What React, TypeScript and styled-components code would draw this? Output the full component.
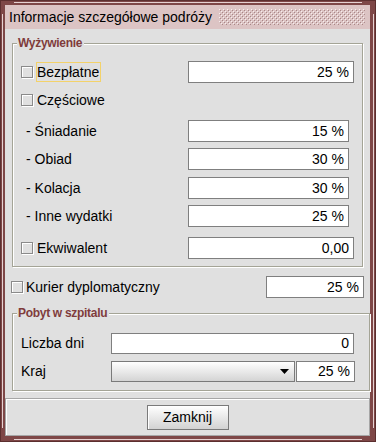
import React from 'react';
import styled, { createGlobalStyle } from 'styled-components';

const GlobalStyle = createGlobalStyle`
  html, body {
    margin: 0;
    padding: 0;
    background: #7e4747;
  }
  * {
    box-sizing: border-box;
  }
`;

const Frame = styled.div`
  position: relative;
  width: 376px;
  height: 442px;
  display: flex;
  flex-direction: column;
  padding: 4px 5px 5px 4px;
  background: #7e4747;
  border: 1px solid #5c2f2f;
  font-family: "Liberation Sans", Arial, sans-serif;
  font-size: 14px;
  color: #000;
  &::before {
    content: '';
    position: absolute;
    top: 1px;
    bottom: 1px;
    left: 13px;
    right: 13px;
    border-top: 1px solid #e6d2d2;
    border-bottom: 1px solid #e6d2d2;
    pointer-events: none;
  }
  &::after {
    content: '';
    position: absolute;
    top: 13px;
    bottom: 13px;
    left: 1px;
    right: 1px;
    border-left: 1px solid #e6d2d2;
    border-right: 1px solid #e6d2d2;
    pointer-events: none;
  }
`;

const TitleBar = styled.div`
  height: 24px;
  display: flex;
  align-items: center;
  padding-left: 4px;
  background: #dcc4c4;
`;

const TitleText = styled.span`
  font-size: 14px;
  white-space: nowrap;
`;

const Bumps = styled.svg`
  flex: 1;
  height: 16px;
  margin: 0 5px 0 7px;
`;

const Content = styled.div`
  flex: 1;
  display: flex;
  flex-direction: column;
  background: #e0e0e0;
  padding-top: 14px;
`;

const Group = styled.div<{ $w?: number; $pb: number; $mt: number }>`
  width: ${p => (p.$w ? `${p.$w}px` : 'auto')};
  margin: ${p => p.$mt}px 0 0 7px;
  padding: 0 0 ${p => p.$pb}px 0;
  border: 1px solid #a4a496;
  box-shadow: inset 1px 1px 0 #fff, 1px 1px 0 #fff;
`;

const GroupTitle = styled.div`
  width: fit-content;
  margin: -8px 0 0 4px;
  padding: 0 2px 0 1px;
  height: 14px;
  line-height: 14px;
  background: #e0e0e0;
  font-size: 12px;
  font-weight: bold;
  letter-spacing: -0.3px;
  color: #7f3c3c;
`;

const Row = styled.div<{ $mt: number; $col: number; $pl: number }>`
  display: grid;
  grid-template-columns: ${p => p.$col}px auto;
  align-items: center;
  height: 22px;
  margin-top: ${p => p.$mt}px;
  padding-left: ${p => p.$pl}px;
`;

const CheckWrap = styled.div<{ $gap: number }>`
  display: flex;
  align-items: center;
  gap: ${p => p.$gap}px;
`;

const CheckBox = styled.span`
  display: inline-block;
  width: 12px;
  height: 12px;
  border: 1px solid #8a8a8a;
  background: #e0e0e0;
  box-shadow: inset 1px 1px 0 #fff, 1px 1px 0 #fff;
`;

const Label = styled.span<{ $focused?: boolean; $indent?: number }>`
  display: inline-block;
  height: 20px;
  line-height: 18px;
  padding-left: ${p => p.$indent ?? 0}px;
  padding-right: 1px;
  border: 1px solid ${p => (p.$focused ? '#f3d26a' : 'transparent')};
  white-space: nowrap;
`;

const Field = styled.div<{ $w: number; $h?: number }>`
  width: ${p => p.$w}px;
  height: ${p => p.$h ?? 22}px;
  line-height: ${p => (p.$h ?? 22) - 2}px;
  background: #fff;
  border: 1px solid #7f7f7f;
  text-align: right;
  padding-right: 4px;
  white-space: nowrap;
`;

const FreeRow = styled.div<{ $mt: number }>`
  display: flex;
  align-items: center;
  justify-content: space-between;
  height: 22px;
  margin-top: ${p => p.$mt}px;
  padding: 0 6px 0 6px;
`;

const ComboPair = styled.div`
  display: flex;
  gap: 1px;
`;

const Combo = styled.div`
  width: 184px;
  height: 21px;
  display: flex;
  align-items: center;
  justify-content: flex-end;
  padding-right: 5px;
  border: 1px solid #7a7a7a;
  background: linear-gradient(#ffffff, #d4d4d4);
`;

const Footer = styled.div`
  height: 38px;
  display: flex;
  align-items: center;
  justify-content: center;
  background: #e0e0e0;
  border: 1px solid #a6a6a6;
  box-shadow: inset 1px 1px 0 #fff;
`;

const Button = styled.button`
  width: 82px;
  height: 25px;
  font-family: "Liberation Sans", Arial, sans-serif;
  font-size: 14px;
  color: #000;
  border: 1px solid #7a7a7a;
  background: linear-gradient(#ffffff, #d2d2d2);
  box-shadow: inset 1px 1px 0 #fff;
  padding: 0;
`;

const Arrow = () => (
  <svg width="9" height="5" viewBox="0 0 9 5">
    <path d="M0 0H9L4.5 5Z" fill="#000" />
  </svg>
);

export default function App() {
  return (
    <>
      <GlobalStyle />
      <Frame>
        <TitleBar>
          <TitleText>Informacje szczegółowe podróży</TitleText>
          <Bumps>
            <defs>
              <pattern id="bump" width="4" height="4" patternUnits="userSpaceOnUse">
                <rect x="0" y="0" width="1" height="1" fill="#f7eeee" />
                <rect x="2" y="2" width="1" height="1" fill="#f7eeee" />
                <rect x="1" y="1" width="1" height="1" fill="#a98686" />
                <rect x="3" y="3" width="1" height="1" fill="#a98686" />
              </pattern>
            </defs>
            <rect width="100%" height="100%" fill="url(#bump)" />
          </Bumps>
        </TitleBar>
        <Content>
          <Group $w={351} $pb={7} $mt={0}>
            <GroupTitle>Wyżywienie</GroupTitle>
            <Row $mt={11} $col={167} $pl={8}>
              <CheckWrap $gap={3}>
                <CheckBox />
                <Label $focused>Bezpłatne</Label>
              </CheckWrap>
              <Field $w={166}>25 %</Field>
            </Row>
            <Row $mt={6} $col={167} $pl={8}>
              <CheckWrap $gap={3}>
                <CheckBox />
                <Label>Częściowe</Label>
              </CheckWrap>
            </Row>
            <Row $mt={9} $col={167} $pl={8}>
              <Label $indent={4}>- Śniadanie</Label>
              <Field $w={161}>15 %</Field>
            </Row>
            <Row $mt={6} $col={167} $pl={8}>
              <Label $indent={4}>- Obiad</Label>
              <Field $w={161}>30 %</Field>
            </Row>
            <Row $mt={7} $col={167} $pl={8}>
              <Label $indent={4}>- Kolacja</Label>
              <Field $w={161}>30 %</Field>
            </Row>
            <Row $mt={6} $col={167} $pl={8}>
              <Label $indent={4}>- Inne wydatki</Label>
              <Field $w={161}>25 %</Field>
            </Row>
            <Row $mt={10} $col={167} $pl={8}>
              <CheckWrap $gap={3}>
                <CheckBox />
                <Label>Ekwiwalent</Label>
              </CheckWrap>
              <Field $w={166}>0,00</Field>
            </Row>
          </Group>
          <FreeRow $mt={9}>
            <CheckWrap $gap={2}>
              <CheckBox />
              <Label>Kurier dyplomatyczny</Label>
            </CheckWrap>
            <Field $w={98}>25 %</Field>
          </FreeRow>
          <Group $pb={8} $mt={15}>
            <GroupTitle>Pobyt w szpitalu</GroupTitle>
            <Row $mt={12} $col={91} $pl={7}>
              <Label>Liczba dni</Label>
              <Field $w={243} $h={21}>0</Field>
            </Row>
            <Row $mt={6} $col={91} $pl={7}>
              <Label>Kraj</Label>
              <ComboPair>
                <Combo>
                  <Arrow />
                </Combo>
                <Field $w={59} $h={21}>25 %</Field>
              </ComboPair>
            </Row>
          </Group>
        </Content>
        <Footer>
          <Button>Zamknij</Button>
        </Footer>
      </Frame>
    </>
  );
}
